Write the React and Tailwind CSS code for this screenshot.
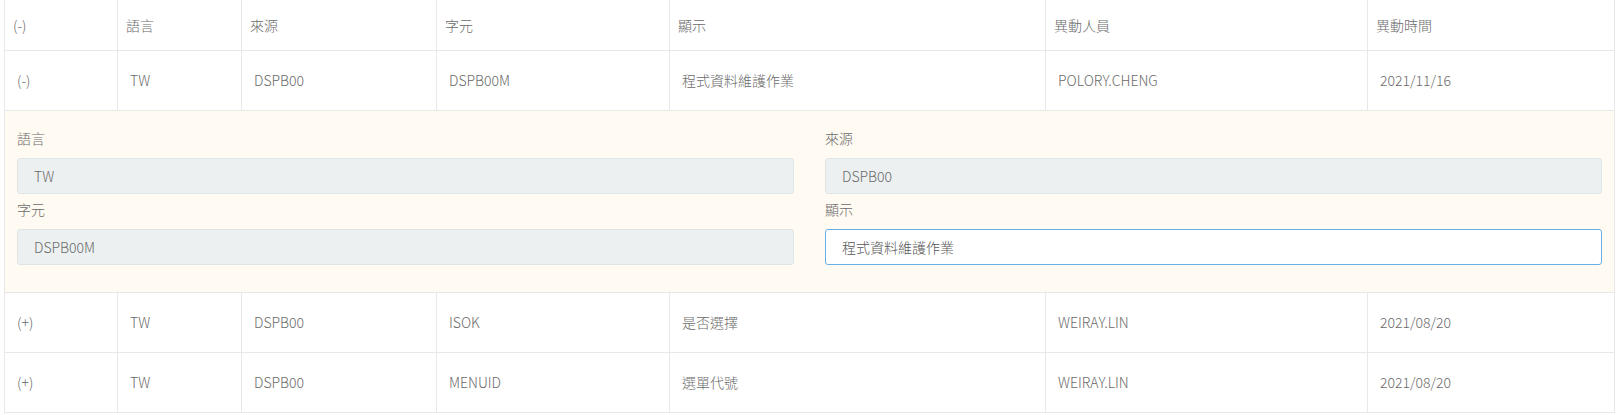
const rows = [
  { sign: '(-)', lang: 'TW', src: 'DSPB00', key: 'DSPB00M', text: '程式資料維護作業', user: 'POLORY.CHENG', date: '2021/11/16', open: true },
  { sign: '(+)', lang: 'TW', src: 'DSPB00', key: 'ISOK', text: '是否選擇', user: 'WEIRAY.LIN', date: '2021/08/20' },
  { sign: '(+)', lang: 'TW', src: 'DSPB00', key: 'MENUID', text: '選單代號', user: 'WEIRAY.LIN', date: '2021/08/20' },
];

const cols = 'grid grid-cols-[113px_124px_195px_233px_376px_322px_1fr]';

const Field = ({ label, value, active }) => (
  <div>
    <div className="h-5 leading-5 mb-[10px]">{label}</div>
    <input
      readOnly
      value={value}
      className={
        active
          ? 'block w-full h-[36px] rounded-[3px] border border-[#66afe9] bg-white pl-4 text-[#555] outline-none'
          : 'block w-full h-[36px] rounded-[3px] border border-[#dfe4e6] bg-[#ecf0f1] pl-4 text-[#6a6a6a] outline-none'
      }
    />
  </div>
);

const Detail = ({ row }) => (
  <div className="bg-[#fffbf2] border-b border-[#e8e8e8] px-3 pt-[17px] pb-[27px] grid grid-cols-2 gap-x-[31px] gap-y-[5px]">
    <Field label="語言" value={row.lang} />
    <Field label="來源" value={row.src} />
    <Field label="字元" value={row.key} />
    <Field label="顯示" value={row.text} active />
  </div>
);

const Row = ({ row }) => {
  const cells = [row.sign, row.lang, row.src, row.key, row.text, row.user, row.date];
  return (
    <div className={`${cols} h-[60px] border-b border-[#e8e8e8]`}>
      {cells.map((c, i) => (
        <div key={i} className={`flex items-center pl-3 ${i < 6 ? 'border-r border-[#e8e8e8]' : ''}`}>
          {c}
        </div>
      ))}
    </div>
  );
};

export default function App() {
  const heads = ['(-)', '語言', '來源', '字元', '顯示', '異動人員', '異動時間'];
  return (
    <div className="bg-white w-full min-h-screen font-['Noto_Sans_CJK_TC',sans-serif] font-light text-[14px] text-[#6a6a6a]">
      <div className="mx-1 border-x border-[#e8e8e8]">
        <div className={`${cols} h-[51px] border-b border-[#e8e8e8]`}>
          {heads.map((h, i) => (
            <div key={i} className={`flex items-center pl-2 ${i < 6 ? 'border-r border-[#e8e8e8]' : ''}`}>
              {h}
            </div>
          ))}
        </div>
        {rows.map((r, i) => (
          <div key={i}>
            <Row row={r} />
            {r.open && <Detail row={r} />}
          </div>
        ))}
      </div>
    </div>
  );
}
